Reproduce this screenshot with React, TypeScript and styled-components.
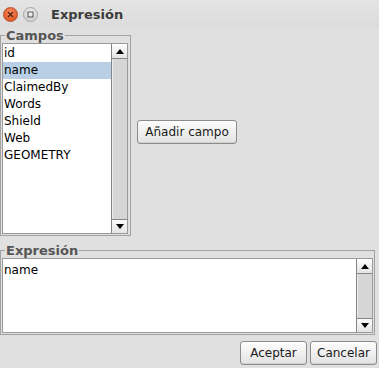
import styled, { createGlobalStyle } from 'styled-components'

const GlobalStyle = createGlobalStyle`
  html, body {
    margin: 0;
    padding: 0;
    background: #e0e0e0;
  }
  body {
    font-family: 'DejaVu Sans', 'Liberation Sans', sans-serif;
    font-size: 12px;
    color: #111;
  }
`

const Window = styled.div`
  width: 379px;
  height: 368px;
  display: flex;
  flex-direction: column;
  background: #e0e0e0;
  overflow: hidden;
`

const TitleBar = styled.div`
  height: 28px;
  display: flex;
  align-items: center;
  gap: 5px;
  padding: 1px 0 0 3px;
  box-sizing: border-box;
  background: linear-gradient(#e4e4e4, #dcdcdc);
`

const WinButton = styled.span<{ $close?: boolean }>`
  width: 15px;
  height: 15px;
  border-radius: 50%;
  display: flex;
  align-items: center;
  justify-content: center;
  box-sizing: border-box;
  border: 1px solid ${p => (p.$close ? '#b9502a' : '#a8a8a8')};
  background: ${p =>
    p.$close
      ? 'radial-gradient(circle at 50% 35%, #f7926a, #e05a25 70%)'
      : 'radial-gradient(circle at 50% 35%, #f4f4f4, #cfcfcf 75%)'};
`

const Title = styled.span`
  margin-left: 8px;
  font-weight: bold;
  font-size: 13px;
  color: #3c3c3c;
`

const Body = styled.div`
  flex: 1;
  display: flex;
  flex-direction: column;
  padding: 0 2px 3px 0;
`

const TopRow = styled.div`
  display: flex;
  align-items: center;
  gap: 6px;
`

const Group = styled.fieldset<{ $w: number; $h: number; $pr: number }>`
  width: ${p => p.$w}px;
  height: ${p => p.$h}px;
  box-sizing: border-box;
  margin: 0;
  padding: 0 ${p => p.$pr}px 1px 1px;
  border: 1px solid #a2a2a2;
  display: flex;
  min-width: 0;
`

const Legend = styled.legend`
  margin-left: 3px;
  padding: 0 1px;
  font-weight: bold;
  font-size: 13px;
  line-height: 15px;
  color: #555;
`

const ScrollPane = styled.div`
  flex: 1;
  display: flex;
  border: 1px solid #9a9a9a;
  background: #fff;
  min-height: 0;
`

const List = styled.div`
  flex: 1;
  display: flex;
  flex-direction: column;
  padding-top: 1px;
`

const Item = styled.div<{ $selected?: boolean }>`
  height: 17px;
  line-height: 17px;
  padding-left: 1px;
  color: #000;
  background: ${p => (p.$selected ? '#b8cfe5' : 'transparent')};
`

const TextArea = styled.div`
  flex: 1;
  padding: 3px 0 0 1px;
  line-height: 17px;
  color: #000;
`

const ScrollBar = styled.div`
  width: 15px;
  display: flex;
  flex-direction: column;
  border-left: 1px solid #858585;
  padding-top: 1px;
`

const ArrowButton = styled.div<{ $down?: boolean }>`
  height: 13px;
  display: flex;
  align-items: center;
  justify-content: center;
  background: linear-gradient(#fbfbfb, #e4e4e4);
  ${p => (p.$down ? 'border-top: 1px solid #858585;' : 'border-bottom: 1px solid #858585;')}
`

const Track = styled.div`
  flex: 1;
  background: #d6d6d6;
  box-shadow: inset 1px 0 0 #ededed;
`

const PushButton = styled.button<{ $w: number }>`
  width: ${p => p.$w}px;
  height: 24px;
  padding: 0;
  box-sizing: border-box;
  border: 1px solid #8c8c8c;
  border-radius: 3px;
  background: linear-gradient(#fdfdfd, #e2e2e2);
  box-shadow: inset 0 -1px 0 #d0d0d0;
  font-family: 'DejaVu Sans', 'Liberation Sans', sans-serif;
  font-size: 12px;
  color: #1a1a1a;
`

const ExprGroupWrap = styled.div`
  margin-top: 7px;
`

const ButtonRow = styled.div`
  margin-top: 6px;
  display: flex;
  justify-content: flex-end;
  gap: 3px;
`

function Arrow({ down }: { down?: boolean }) {
  return (
    <svg width='8' height='5' viewBox='0 0 8 5'>
      <polygon points={down ? '0,0 8,0 4,5' : '0,5 8,5 4,0'} fill='#000' />
    </svg>
  )
}

function VScroll() {
  return (
    <ScrollBar>
      <ArrowButton>
        <Arrow />
      </ArrowButton>
      <Track />
      <ArrowButton $down>
        <Arrow down />
      </ArrowButton>
    </ScrollBar>
  )
}

const fields = ['id', 'name', 'ClaimedBy', 'Words', 'Shield', 'Web', 'GEOMETRY']

export default function App() {
  return (
    <Window>
      <GlobalStyle />
      <TitleBar>
        <WinButton $close>
          <svg width='7' height='7' viewBox='0 0 7 7'>
            <path d='M1 1L6 6M6 1L1 6' stroke='#5a2310' strokeWidth='1.4' />
          </svg>
        </WinButton>
        <WinButton>
          <svg width='7' height='7' viewBox='0 0 7 7'>
            <rect x='1' y='1' width='5' height='5' fill='none' stroke='#555' strokeWidth='1' />
          </svg>
        </WinButton>
        <Title>Expresión</Title>
      </TitleBar>
      <Body>
        <TopRow>
          <Group $w={131} $h={208} $pr={2}>
            <Legend>Campos</Legend>
            <ScrollPane>
              <List>
                {fields.map(f => (
                  <Item key={f} $selected={f === 'name'}>
                    {f}
                  </Item>
                ))}
              </List>
              <VScroll />
            </ScrollPane>
          </Group>
          <PushButton $w={100}>Añadir campo</PushButton>
        </TopRow>
        <ExprGroupWrap>
          <Group $w={375} $h={92} $pr={1}>
            <Legend>Expresión</Legend>
            <ScrollPane>
              <TextArea>name</TextArea>
              <VScroll />
            </ScrollPane>
          </Group>
        </ExprGroupWrap>
        <ButtonRow>
          <PushButton $w={67}>Aceptar</PushButton>
          <PushButton $w={67}>Cancelar</PushButton>
        </ButtonRow>
      </Body>
    </Window>
  )
}
